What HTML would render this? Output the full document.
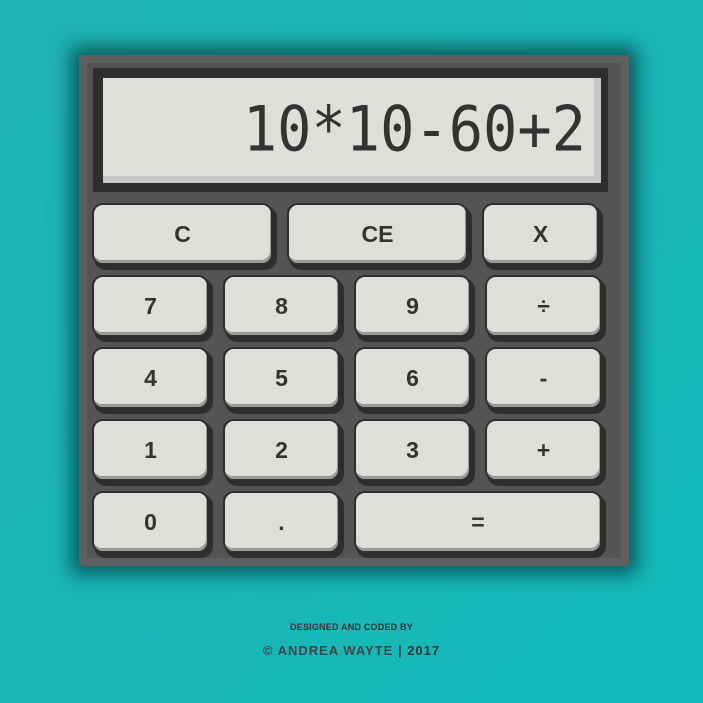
<!DOCTYPE html>
<html><head><style>
html,body{margin:0;padding:0}
body{width:703px;height:703px;background:linear-gradient(135deg,#20b2b4,#12baba);position:relative;overflow:hidden;font-family:"Liberation Sans",sans-serif}
.calc{position:absolute;left:79px;top:55px;width:550px;height:511px;background:#5f5f5f;box-shadow:0 0 18px 8px rgba(0,60,60,.75)}
.inner{position:absolute;left:8px;top:8px;width:534px;height:495px;background:#545454}
.disp{position:absolute;left:93px;top:68px;width:515px;height:124px;background:#2e2e2e}
.scr{position:absolute;left:10px;top:10px;width:498px;height:105px;background:#c6c6c4}
.scr2{position:absolute;left:0;top:0;width:491px;height:98px;background:#dfdfd9}
.txt{position:absolute;right:8px;top:24px;font-family:"DejaVu Sans Mono",monospace;font-size:57px;color:#333;line-height:50px;transform:scaleY(1.1);transform-origin:right top;white-space:nowrap;font-weight:normal}
.k{position:absolute;background:#dfdfd9;border-radius:9px;box-shadow:0 0 0 2px #2e2e2e,3px 4px 0 3px #2e2e2e,inset -1px -3px 0 #9a9a98;font-weight:900;font-size:23px;color:#333;display:flex;align-items:center;justify-content:center;height:58px}
.f{position:absolute;width:703px;text-align:center;color:#333;font-weight:900}
</style></head><body>
<div class="calc"><div class="inner"></div></div>
<div class="disp"><div class="scr"><div class="scr2"><div class="txt">10*10-60+2</div></div></div></div>
<div class="k" style="left:94px;top:205px;width:177px">C</div>
<div class="k" style="left:289px;top:205px;width:177px">CE</div>
<div class="k" style="left:484px;top:205px;width:113px">X</div>
<div class="k" style="left:94px;top:277px;width:113px">7</div>
<div class="k" style="left:225px;top:277px;width:113px">8</div>
<div class="k" style="left:356px;top:277px;width:113px">9</div>
<div class="k" style="left:487px;top:277px;width:113px">÷</div>
<div class="k" style="left:94px;top:349px;width:113px">4</div>
<div class="k" style="left:225px;top:349px;width:113px">5</div>
<div class="k" style="left:356px;top:349px;width:113px">6</div>
<div class="k" style="left:487px;top:349px;width:113px">-</div>
<div class="k" style="left:94px;top:421px;width:113px">1</div>
<div class="k" style="left:225px;top:421px;width:113px">2</div>
<div class="k" style="left:356px;top:421px;width:113px">3</div>
<div class="k" style="left:487px;top:421px;width:113px">+</div>
<div class="k" style="left:94px;top:493px;width:113px">0</div>
<div class="k" style="left:225px;top:493px;width:113px">.</div>
<div class="k" style="left:356px;top:493px;width:244px">=</div>
<div class="f" style="top:622px;font-size:9px;letter-spacing:.2px">DESIGNED AND CODED BY</div>
<div class="f" style="top:643px;font-size:13px;color:#444;letter-spacing:1px">© ANDREA WAYTE <span style="color:#333">| 2017</span></div>
</body></html>
